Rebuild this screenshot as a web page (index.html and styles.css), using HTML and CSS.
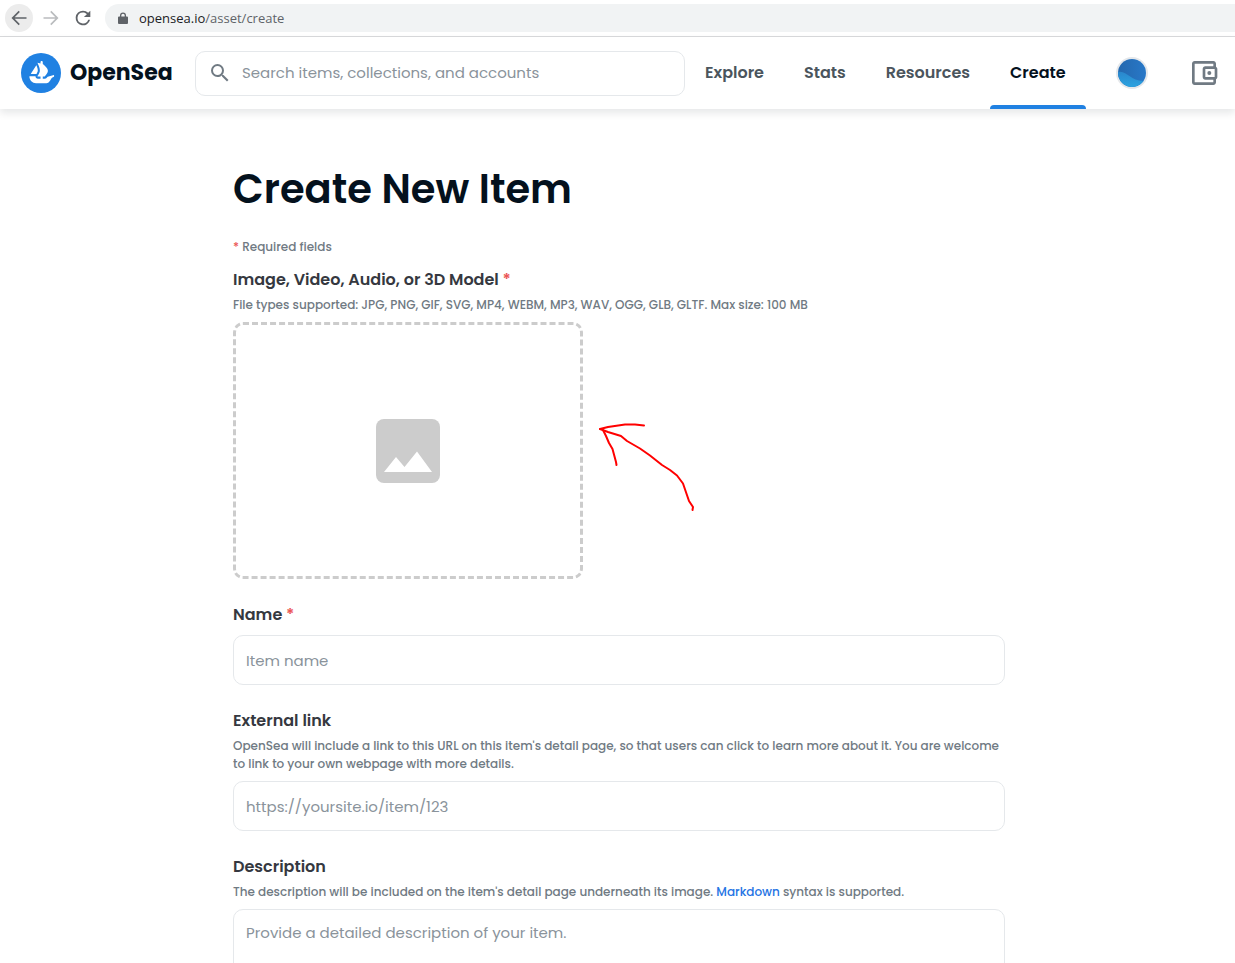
FILE: index.html
```html
<!DOCTYPE html>
<html lang="en">
<head>
    <meta charset="UTF-8">
    <meta name="viewport" content="width=device-width, initial-scale=1.0">
    <title>Create New Item | OpenSea</title>
    <link rel="stylesheet" href="styles.css">
</head>
<body>

    <!-- Browser bar -->
    <div class="browser-bar">
        <button class="browser-button browser-back" aria-label="Back">
            <svg width="20" height="20" viewBox="0 0 24 24"><path fill="#5f6368" d="M21 11H6.8l6.2-6.2L11.600 3.400 3 12l8.600 8.600 1.400-1.400L6.800 13H21z"/></svg>
        </button>
        <button class="browser-button" aria-label="Forward">
            <svg width="20" height="20" viewBox="0 0 24 24"><path fill="#babcbe" d="M3 11h14.200L11 4.800l1.400-1.400L21 12l-8.600 8.600-1.400-1.400 6.200-6.200H3z"/></svg>
        </button>
        <button class="browser-button" aria-label="Reload">
            <svg width="22" height="22" viewBox="0 0 24 24"><path fill="#5f6368" d="M17.650 6.350A7.960 7.960 0 0 0 12 4a8 8 0 1 0 7.730 10h-2.080A6 6 0 1 1 12 6c1.660 0 3.140.690 4.220 1.780L13 11h7V4z"/></svg>
        </button>
        <div class="address">
            <svg width="10" height="13" viewBox="0 0 10 13"><path fill="#5f6368" d="M1 4.500h1V3.500a3 3 0 0 1 6 0v1h1a1 1 0 0 1 1 1V11a1 1 0 0 1-1 1H1a1 1 0 0 1-1-1V5.500a1 1 0 0 1 1-1zM3.300 4.500h3.400v-1a1.700 1.700 0 0 0-3.400 0z"/></svg>
            <span class="url"><span class="domain">opensea.io</span>/asset/create</span>
        </div>
    </div>

    <!-- Header -->
    <header>
        <a class="logo" href="#">
            <svg width="40" height="40" viewBox="0 0 90 90">
                <circle cx="45" cy="45" r="45" fill="#2081e2"/>
                <path fill="#fff" d="M22.200 46.500L34.100 27.900C34.300 27.600 34.700 27.700 34.800 27.900C36.800 32.300 38.400 37.800 37.700 41.200C37.300 42.600 36.400 44.500 35.400 46.200L34.900 47C34.800 47.100 34.700 47.100 34.600 47.100H22.500C22.200 47.100 22 46.800 22.200 46.500Z"/>
                <path fill="#fff" d="M74.400 49.900V52.800C74.400 53 74.300 53.100 74.100 53.200C73.200 53.600 70.100 55 68.800 56.800C65.500 61.400 63 67.900 57.400 67.900H33.900C25.600 67.900 18.900 61.200 18.900 52.800V52.600C18.900 52.300 19.100 52.200 19.300 52.200H32.400C32.600 52.200 32.800 52.400 32.800 52.700C32.700 53.500 32.900 54.400 33.300 55.200C34 56.700 35.700 57.700 37.400 57.700H43.900V52.700H37.500C37.100 52.700 36.900 52.300 37.100 52C38 50.800 38.800 49.500 39.700 48C40.300 46.900 40.900 45.800 41.300 44.700C42.100 42.900 42.400 41.200 42.400 39.300C42.400 37.500 42.100 35.600 41.700 33.900C40.900 30.600 39.500 27.200 38 24.100L37 22.100C36.900 21.900 37 21.600 37.300 21.700L43.900 23.500V20.600C43.900 19.200 45 18 46.400 18C47.800 18 49 19.200 49 20.600V24.900L49.500 25.100C50.900 26.100 51.700 26.800 52.900 28C55.800 30.700 58 33.400 59.200 35.700C60.400 38 60.900 40.300 60.300 42.300C59.600 45.500 56.500 49.300 53.200 52.600C53.100 52.700 53 52.700 52.900 52.700H49V57.700H53.900C55 57.700 56.100 57.300 56.900 56.600C57.200 56.400 58.500 55.300 60 53.600L60.200 53.500L73.900 49.500C74.100 49.500 74.400 49.600 74.400 49.900Z"/>
            </svg>
            <span>OpenSea</span>
        </a>

        <div class="search">
            <svg width="24" height="24" viewBox="0 0 24 24"><path fill="#707a83" d="M15.500 14h-.790l-.280-.270A6.470 6.470 0 0 0 16 9.500 6.500 6.500 0 1 0 9.500 16c1.610 0 3.090-.590 4.230-1.570l.270.280v.790l5 4.990L20.490 19zM9.500 14a4.500 4.500 0 1 1 0-9 4.500 4.500 0 0 1 0 9z"/></svg>
            <input type="text" placeholder="Search items, collections, and accounts" aria-label="Search">
        </div>

        <nav>
            <a href="#">Explore</a>
            <a href="#">Stats</a>
            <a href="#">Resources</a>
            <a href="#" class="active">Create</a>
        </nav>

        <div class="account">
            <button class="avatar" aria-label="Account">
                <svg width="28" height="28" viewBox="0 0 28 28">
                    <defs>
                        <linearGradient id="wave" x1="0" y1="0" x2="0" y2="1">
                            <stop offset="0" stop-color="#2a86cc"/>
                            <stop offset="1" stop-color="#2ba3e0"/>
                        </linearGradient>
                        <linearGradient id="sky" x1="0" y1="0" x2="1" y2="0">
                            <stop offset="0" stop-color="#2468ae"/>
                            <stop offset="1" stop-color="#2878c8"/>
                        </linearGradient>
                    </defs>
                    <circle cx="14" cy="14" r="14" fill="url(#sky)"/>
                    <path fill="url(#wave)" d="M0 13C9 11 12 22 25.500 21.900A14 14 0 0 1 0 13z"/>
                </svg>
            </button>
            <button class="wallet" aria-label="Wallet">
                <svg width="32" height="32" viewBox="0 0 24 24"><path fill="#707a83" d="M21 7.280V5c0-1.100-.900-2-2-2H5c-1.110 0-2 .900-2 2v14c0 1.100.890 2 2 2h14c1.100 0 2-.900 2-2v-2.280c.590-.350 1-.980 1-1.720V9c0-.740-.410-1.370-1-1.720zM20 9v6h-7V9h7zM5 19V5h14v2h-6c-1.100 0-2 .900-2 2v6c0 1.100.900 2 2 2h6v2H5z"/><circle cx="16" cy="12" r="1.500" fill="#707a83"/></svg>
            </button>
        </div>
    </header>

    <!-- Create item form -->
    <main>
        <h1>Create New Item</h1>
        <form>
            <p class="help required-note"><span class="star">*</span> Required fields</p>

            <div class="field">
                <label for="media">Image, Video, Audio, or 3D Model <span class="star">*</span></label>
                <p class="help">File types supported: JPG, PNG, GIF, SVG, MP4, WEBM, MP3, WAV, OGG, GLB, GLTF. Max size: 100 MB</p>
                <div class="upload">
                    <input type="file" id="media">
                    <svg class="image-icon" width="64" height="64" viewBox="0 0 64 64"><rect width="64" height="64" rx="8" fill="#ccc"/><path fill="#fff" d="M8 53L20 38l8.500 10L41 32.500 56 53z"/></svg>
                    <svg class="arrow" width="100" height="96" viewBox="0 0 100 96">
                        <path d="M2 9L10 7L27 4.500L37 4.500L46 5.500"/>
                        <path d="M2 9L10 12L23 16L29 21L42 28.500L52 35.500L64 45L72 50L79 55.500L85 63.500L91 81L95 87L94.500 90"/>
                        <path d="M5 10L8 16L11 23L14.500 29L18 42L18.500 45"/>
                    </svg>
                </div>
            </div>

            <div class="field">
                <label for="name">Name <span class="star">*</span></label>
                <input class="box" type="text" id="name" placeholder="Item name">
            </div>

            <div class="field">
                <label for="link">External link</label>
                <p class="help">OpenSea will include a link to this URL on this item's detail page, so that users can click to learn more about it. You are welcome to link to your own webpage with more details.</p>
                <input class="box" type="text" id="link" placeholder="https://yoursite.io/item/123">
            </div>

            <div class="field">
                <label for="description">Description</label>
                <p class="help">The description will be included on the item's detail page underneath its image. <a href="#">Markdown</a> syntax is supported.</p>
                <textarea class="box" id="description" rows="4" placeholder="Provide a detailed description of your item."></textarea>
            </div>
        </form>
    </main>

</body>
</html>
```
FILE: styles.css
```css
* {
    box-sizing: border-box;
}

html {
    height: 100%;
    overflow: hidden;
}

body {
    font-family: Poppins, Inter, sans-serif;
    font-size: 16px;
    line-height: 24px;
    margin: 0;
    background-color: white;
    color: #353840;
}

button {
    padding: 0;
    border: none;
    background: none;
    cursor: pointer;
}

svg {
    display: block;
}

/* Browser bar */
.browser-bar {
    display: flex;
    align-items: center;
    gap: 4px;
    height: 37px;
    padding-left: 5px;
    border-bottom: 1px solid #d9dadc;
}

.browser-button {
    display: flex;
    align-items: center;
    justify-content: center;
    width: 28px;
    height: 28px;
    border-radius: 50%;
}

.browser-back {
    background-color: #ececec;
}

.address {
    flex: 1;
    display: flex;
    align-items: center;
    gap: 11px;
    height: 28px;
    margin-left: 4px;
    padding-left: 13px;
    background-color: #f1f3f4;
    border-radius: 14px 0 0 14px;
}

.url {
    font-family: "Open Sans", sans-serif;
    font-size: 13px;
    color: #5f6368;
}

.domain {
    color: #202124;
}

/* Header */
header {
    display: flex;
    align-items: center;
    height: 72px;
    padding: 0 15px 0 21px;
    box-shadow: 0 4px 8px rgba(4, 17, 29, 0.1);
}

.logo {
    display: flex;
    align-items: center;
    gap: 9px;
    width: 174px;
    color: #04111d;
    font-size: 22px;
    font-weight: 700;
    text-decoration: none;
}

.search {
    flex: 1;
    display: flex;
    align-items: center;
    gap: 10px;
    max-width: 490px;
    height: 45px;
    padding: 0 12px;
    border: 1px solid #e5e8eb;
    border-radius: 10px;
}

.search input {
    flex: 1;
    padding: 0;
    border: none;
    outline: none;
    font: inherit;
    font-size: 15px;
}

::placeholder {
    color: #8a939b;
    opacity: 1;
}

nav {
    display: flex;
    align-self: stretch;
}

nav a {
    display: flex;
    align-items: center;
    padding: 4px 20px 0;
    border-bottom: 4px solid transparent;
    color: #4b555d;
    font-weight: 600;
    text-decoration: none;
}

nav a.active {
    color: #04111d;
    position: relative;
}

/* Marker under the current page */
nav a.active::after {
    content: "";
    position: absolute;
    left: 0;
    right: 0;
    bottom: -4px;
    height: 4px;
    background-color: #2081e2;
    border-radius: 4px 4px 0 0;
}

.account {
    display: flex;
    align-items: center;
    gap: 40px;
    margin-left: auto;
}

.avatar {
    border: 2px solid #e5e8eb;
    border-radius: 50%;
}

/* Form */
main {
    max-width: 775px;
    margin: 0 auto;
    padding: 50px 0 0 3px;
}

h1 {
    margin: 0;
    color: #04111d;
    font-size: 40px;
    font-weight: 600;
    line-height: 60px;
}

.help {
    margin: 4px 0 8px;
    color: #707a83;
    font-size: 12px;
    font-weight: 500;
    line-height: 18px;
}

.help a {
    color: #2574e4;
    text-decoration: none;
}

.required-note {
    margin: 19px 0 12px;
}

.star {
    color: #eb5757;
}

.field {
    margin-bottom: 24px;
}

.field label {
    display: block;
    font-weight: 600;
}

label + .box {
    margin-top: 8px;
}

.box {
    display: block;
    width: 100%;
    height: 50px;
    padding: 12px;
    border: 1px solid #e5e8eb;
    border-radius: 10px;
    font: inherit;
    font-size: 15px;
}

textarea.box {
    height: 120px;
    padding-top: 11px;
}

.upload {
    position: relative;
    display: flex;
    align-items: center;
    justify-content: center;
    max-width: 350px;
    height: 257px;
    border: 3px dashed #ccc;
    border-radius: 10px;
}

/* The real file input covers the whole drop area */
.upload input {
    position: absolute;
    inset: 0;
    width: 100%;
    opacity: 0;
    cursor: pointer;
}

.arrow {
    position: absolute;
    left: 362px;
    top: 95px;
    fill: none;
    stroke: #f00;
    stroke-width: 2;
    stroke-linecap: round;
    stroke-linejoin: round;
    pointer-events: none;
}
```
